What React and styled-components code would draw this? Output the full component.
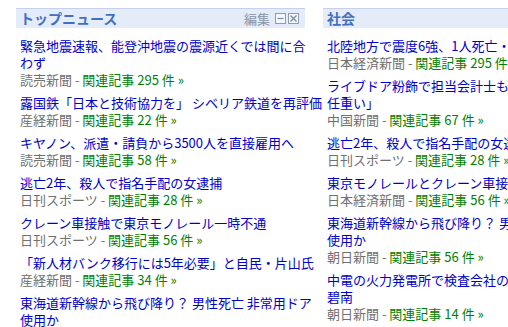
import React from "react";
import styled, { createGlobalStyle } from "styled-components";

const GlobalStyle = createGlobalStyle`
  body {
    margin: 0;
    background: #ffffff;
    font-family: "Noto Sans CJK JP", "Liberation Sans", sans-serif;
    overflow: hidden;
  }
`;

const columns = [
    {
        title: "トップニュース",
        editable: true,
        items: [
            { lines: ["緊急地震速報、能登沖地震の震源近くでは間に合", "わず"], source: "読売新聞", count: 295 },
            { lines: ["露国鉄「日本と技術協力を」 シベリア鉄道を再評価"], source: "産経新聞", count: 22 },
            { lines: ["キヤノン、派遣・請負から3500人を直接雇用へ"], source: "読売新聞", count: 58 },
            { lines: ["逃亡2年、殺人で指名手配の女逮捕"], source: "日刊スポーツ", count: 28 },
            { lines: ["クレーン車接触で東京モノレール一時不通"], source: "日刊スポーツ", count: 56 },
            { lines: ["「新人材バンク移行には5年必要」と自民・片山氏"], source: "産経新聞", count: 34 },
            { lines: ["東海道新幹線から飛び降り？ 男性死亡 非常用ドア", "使用か"], source: "朝日新聞", count: 56 },
        ],
    },
    {
        title: "社会",
        items: [
            { lines: ["北陸地方で震度6強、1人死亡・170人けが"], source: "日本経済新聞", count: 295 },
            { lines: ["ライブドア粉飾で担当会計士も実刑「責", "任重い」"], source: "中国新聞", count: 67 },
            { lines: ["逃亡2年、殺人で指名手配の女逮捕"], source: "日刊スポーツ", count: 28 },
            { lines: ["東京モノレールとクレーン車接触、一時不通"], source: "日本経済新聞", count: 56 },
            { lines: ["東海道新幹線から飛び降り？ 男性死亡 非常用ドア", "使用か"], source: "朝日新聞", count: 56 },
            { lines: ["中電の火力発電所で検査会社の社員が死亡 愛知・", "碧南"], source: "朝日新聞", count: 14 },
        ],
    },
];

const BoxIcon = ({ kind }) => (
    <svg width="11" height="11" viewBox="0 0 11 11">
        <rect x="0.5" y="0.5" width="10" height="10" fill="#f4f7fc" stroke="#8c9cb8" />
        {kind === "min" ? (
            <line x1="2.5" y1="5.5" x2="8.5" y2="5.5" stroke="#7f8ea8" strokeWidth="1.2" />
        ) : (
            <path d="M2.5 2.5 L8.5 8.5 M8.5 2.5 L2.5 8.5" stroke="#7f8ea8" strokeWidth="1.4" />
        )}
    </svg>
);

const App = () => (
    <>
        <GlobalStyle />
        <Page>
            {columns.map((col) => (
                <Section key={col.title}>
                    <Header>
                        <Title>{col.title}</Title>
                        {col.editable && (
                            <Tools>
                                <Edit>編集</Edit>
                                <BoxIcon kind="min" />
                                <BoxIcon kind="close" />
                            </Tools>
                        )}
                    </Header>
                    <List>
                        {col.items.map((item, i) => (
                            <Item key={i}>
                                {item.lines.map((line, j) => (
                                    <Headline key={j}>{line}</Headline>
                                ))}
                                <Source>
                                    {item.source} - <Related>関連記事 {item.count} 件 »</Related>
                                </Source>
                            </Item>
                        ))}
                    </List>
                </Section>
            ))}
        </Page>
    </>
);

const Page = styled.div`
    display: grid;
    grid-template-columns: 289px 1fr;
    column-gap: 18px;
    padding: 8px 0 0 16px;
    height: 327px;
    box-sizing: border-box;
    overflow: hidden;
`;

const Section = styled.div`
    display: flex;
    flex-direction: column;
    min-width: 0;
`;

const Header = styled.div`
    display: flex;
    align-items: center;
    justify-content: space-between;
    height: 19px;
    padding: 0 6px 0 4px;
    background: #e5ecf9;
    border-top: 1px solid #c3d1ec;
`;

const Title = styled.span`
    font-size: 14px;
    font-weight: bold;
    color: #4170c2;
    line-height: 19px;
`;

const Tools = styled.div`
    display: flex;
    align-items: center;
    gap: 2px;

    svg {
        display: block;
    }
`;

const Edit = styled.span`
    font-size: 13px;
    color: #8a94a6;
    margin-right: 3px;
    line-height: 19px;
`;

const List = styled.div`
    display: flex;
    flex-direction: column;
    gap: 6px;
    padding: 9px 0 0 4px;
`;

const Item = styled.div`
    display: flex;
    flex-direction: column;
`;

const Headline = styled.div`
    font-size: 13px;
    line-height: 17px;
    color: #0000cc;
    white-space: nowrap;
`;

const Source = styled.div`
    font-size: 13px;
    line-height: 17px;
    color: #707070;
    white-space: nowrap;
`;

const Related = styled.span`
    color: #008000;
`;

export default App;
